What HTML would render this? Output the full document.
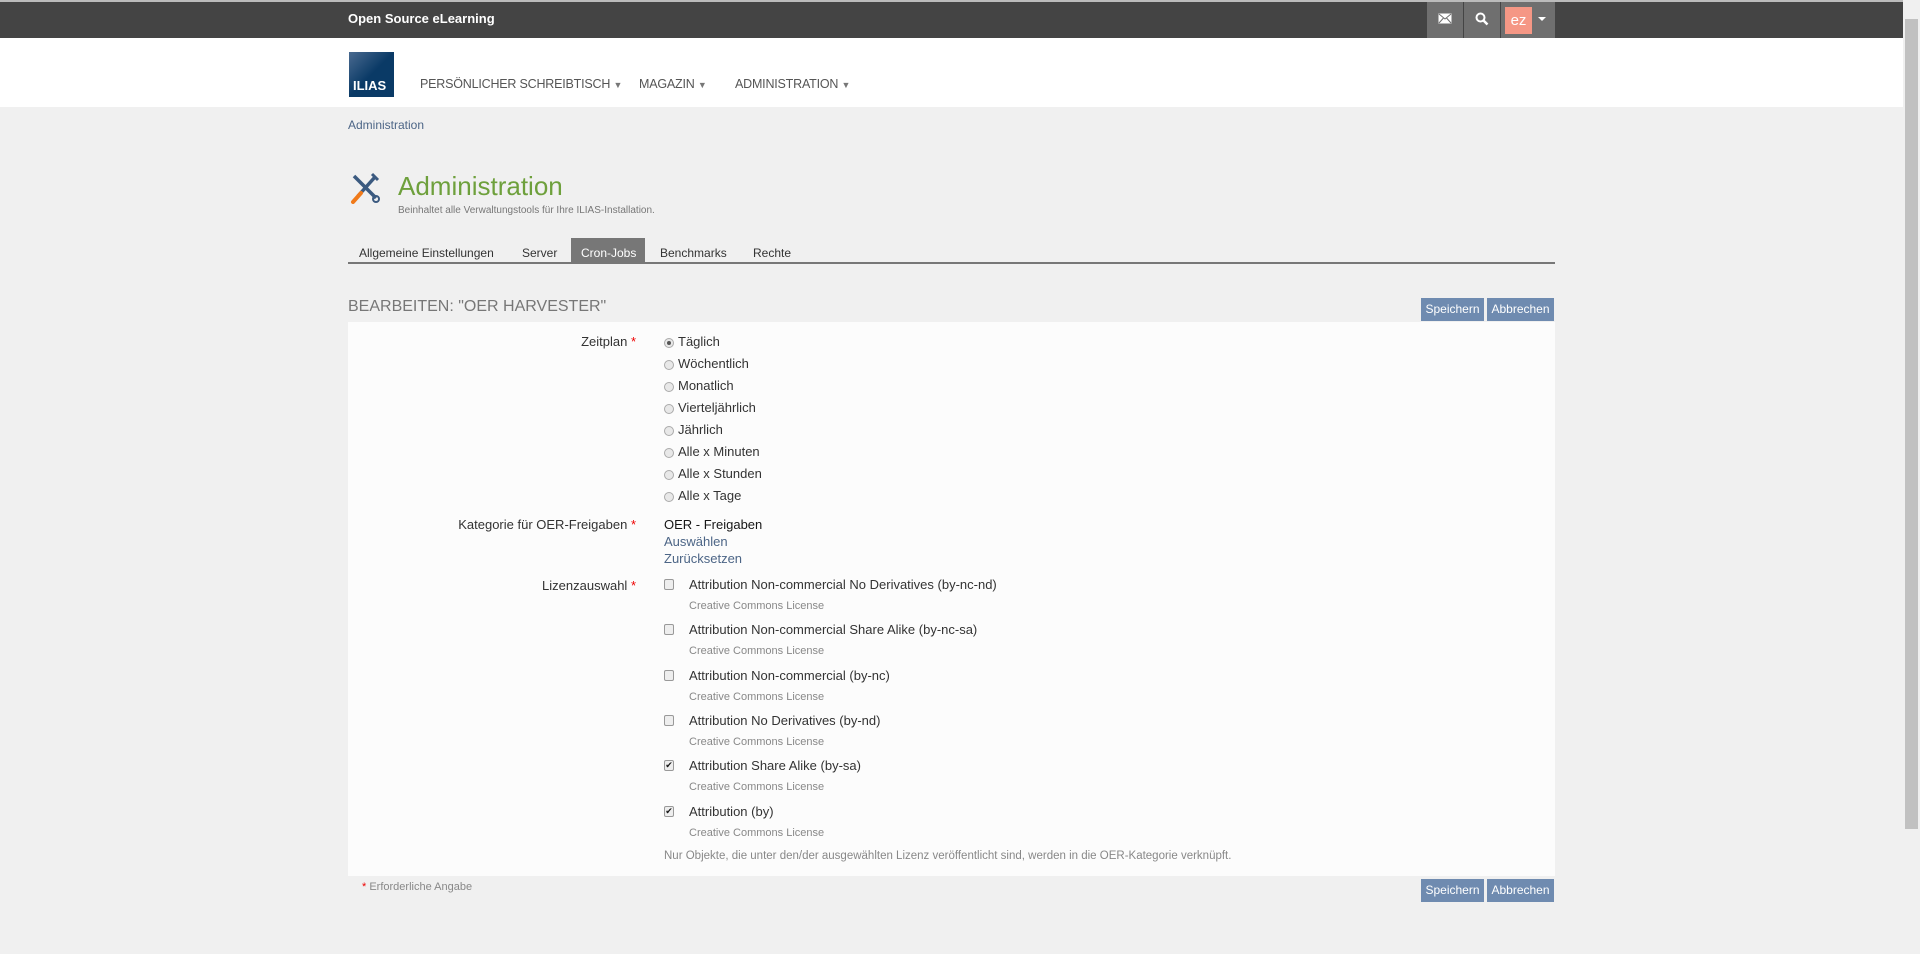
<!DOCTYPE html>
<html><head><meta charset="utf-8">
<style>
*{box-sizing:border-box;margin:0;padding:0}
body{width:1920px;height:954px;overflow:hidden;background:#f0f0f0;font-family:"Liberation Sans",sans-serif;color:#161616;position:relative;font-size:13px}
.abs{position:absolute}
#top{left:0;top:0;width:1903px;height:38px;background:#444;border-top:2px solid #bbb}
#nav{left:0;top:38px;width:1903px;height:69px;background:#fff}
#sb{left:1903px;top:0;width:17px;height:954px;background:#f0f0f0}
#sb div{position:absolute;left:2px;top:19px;width:13px;height:810px;background:#c1c1c1}
.navi{top:77px;font-size:12.5px;color:#555;letter-spacing:-0.2px}
.navi span{font-size:9px;color:#777}
.lbl{right:1284px;text-align:right;white-space:nowrap;color:#333}
.star{color:#e00}
.r{left:664px;width:10px;height:10px;border:1px solid #aaa;border-radius:50%;background:#e8e8e8}
.rt{left:678px;color:#333}
.cb{left:664px;width:10px;height:11px;border:1px solid #999;border-radius:2px;background:#eee}
.ct{left:689px;color:#333}
.cs{left:689px;font-size:11px;color:#888}
a,.lnk{color:#4c6586}
.btn{height:23px;background:#6f8bb0;color:#fff;font-size:12px;line-height:23px;text-align:center}
.tab{top:246px;font-size:12px;color:#333}
</style></head><body>
<div id="top" class="abs"></div>
<div class="abs" style="left:348px;top:11px;color:#fff;font-weight:bold;font-size:13px">Open Source eLearning</div>
<div class="abs" style="left:1427px;top:2px;width:36px;height:36px;background:#6f6f6f"></div>
<div class="abs" style="left:1464px;top:2px;width:36px;height:36px;background:#6f6f6f"></div>
<div class="abs" style="left:1501px;top:2px;width:54px;height:36px;background:#6f6f6f"></div>
<svg class="abs" style="left:1438px;top:13px" width="14" height="11"><rect x="0.5" y="0.5" width="13" height="10" fill="#fff"/><path d="M1 1L7 6L13 1M1 10L5.5 5M13 10L8.5 5" stroke="#6f6f6f" fill="none"/></svg>
<svg class="abs" style="left:1475px;top:12px" width="14" height="14"><circle cx="5.5" cy="5.5" r="4" stroke="#fff" stroke-width="2" fill="none"/><path d="M8.5 8.5L12.5 12.5" stroke="#fff" stroke-width="2.5"/></svg>
<div class="abs" style="left:1505px;top:7px;width:27px;height:27px;background:#f59785;color:#fff;font-size:15px;text-align:center;line-height:27px">ez</div>
<div class="abs" style="left:1538px;top:17px;border-left:4px solid transparent;border-right:4px solid transparent;border-top:4px solid #fff"></div>
<div id="nav" class="abs"></div>
<div class="abs" style="left:349px;top:52px;width:45px;height:45px;background:linear-gradient(135deg,#4a6a90,#0a3a66 50%);color:#fff;font-weight:bold;font-size:13px;padding:26px 0 0 4px">ILIAS</div>
<div class="abs navi" style="left:420px">PERSÖNLICHER SCHREIBTISCH <span>▼</span></div>
<div class="abs navi" style="left:639px">MAGAZIN <span>▼</span></div>
<div class="abs navi" style="left:735px">ADMINISTRATION <span>▼</span></div>
<div class="abs" style="left:348px;top:118px;font-size:12px;color:#4c6586">Administration</div>
<svg class="abs" style="left:350px;top:172px" width="30" height="32" viewBox="0 0 30 32"><path d="M4 4L26 26" stroke="#3b5a80" stroke-width="3.5"/><circle cx="26" cy="27" r="3" fill="none" stroke="#3b5a80" stroke-width="2"/><path d="M25 5L8 24" stroke="#3b5a80" stroke-width="3.5"/><path d="M11 21L3 30" stroke="#f07a1a" stroke-width="4" stroke-linecap="round"/><path d="M22 2l6 6" stroke="#3b5a80" stroke-width="3"/></svg>
<div class="abs" style="left:398px;top:171px;font-size:26px;color:#6ea03c">Administration</div>
<div class="abs" style="left:398px;top:205px;font-size:10px;color:#777">Beinhaltet alle Verwaltungstools für Ihre ILIAS-Installation.</div>
<div class="abs" style="left:348px;top:262px;width:1207px;height:2px;background:#777"></div>
<div class="abs" style="left:571px;top:238px;width:74px;height:25px;background:#777"></div>
<div class="abs tab" style="left:359px">Allgemeine Einstellungen</div>
<div class="abs tab" style="left:522px">Server</div>
<div class="abs tab" style="left:581px;color:#fff">Cron-Jobs</div>
<div class="abs tab" style="left:660px">Benchmarks</div>
<div class="abs tab" style="left:753px">Rechte</div>
<div class="abs" style="left:348px;top:298px;font-size:16px;color:#777">BEARBEITEN: "OER HARVESTER"</div>
<div class="abs btn" style="left:1421px;top:298px;width:63px">Speichern</div>
<div class="abs btn" style="left:1487px;top:298px;width:67px">Abbrechen</div>
<div class="abs" style="left:348px;top:322px;width:1207px;height:554px;background:#fcfcfc"></div>
<div class="abs lbl" style="top:334px">Zeitplan <span class="star">*</span></div>
<div class="abs r" style="top:338px"><div style="width:4px;height:4px;margin:2px;background:#555;border-radius:50%"></div></div><div class="abs rt" style="top:334px">Täglich</div>
<div class="abs r" style="top:360px"></div><div class="abs rt" style="top:356px">Wöchentlich</div>
<div class="abs r" style="top:382px"></div><div class="abs rt" style="top:378px">Monatlich</div>
<div class="abs r" style="top:404px"></div><div class="abs rt" style="top:400px">Vierteljährlich</div>
<div class="abs r" style="top:426px"></div><div class="abs rt" style="top:422px">Jährlich</div>
<div class="abs r" style="top:448px"></div><div class="abs rt" style="top:444px">Alle x Minuten</div>
<div class="abs r" style="top:470px"></div><div class="abs rt" style="top:466px">Alle x Stunden</div>
<div class="abs r" style="top:492px"></div><div class="abs rt" style="top:488px">Alle x Tage</div>
<div class="abs lbl" style="top:517px">Kategorie für OER-Freigaben <span class="star">*</span></div>
<div class="abs" style="left:664px;top:517px">OER - Freigaben</div>
<div class="abs lnk" style="left:664px;top:534px">Auswählen</div>
<div class="abs lnk" style="left:664px;top:551px">Zurücksetzen</div>
<div class="abs lbl" style="top:578px">Lizenzauswahl <span class="star">*</span></div>
<div class="abs cb" style="top:579px"></div><div class="abs ct" style="top:577px">Attribution Non-commercial No Derivatives (by-nc-nd)</div><div class="abs cs" style="top:600px">Creative Commons License</div>
<div class="abs cb" style="top:624px"></div><div class="abs ct" style="top:622px">Attribution Non-commercial Share Alike (by-nc-sa)</div><div class="abs cs" style="top:645px">Creative Commons License</div>
<div class="abs cb" style="top:670px"></div><div class="abs ct" style="top:668px">Attribution Non-commercial (by-nc)</div><div class="abs cs" style="top:691px">Creative Commons License</div>
<div class="abs cb" style="top:715px"></div><div class="abs ct" style="top:713px">Attribution No Derivatives (by-nd)</div><div class="abs cs" style="top:736px">Creative Commons License</div>
<div class="abs cb" style="top:760px;font-size:9px;line-height:9px;text-align:center">✔</div><div class="abs ct" style="top:758px">Attribution Share Alike (by-sa)</div><div class="abs cs" style="top:781px">Creative Commons License</div>
<div class="abs cb" style="top:806px;font-size:9px;line-height:9px;text-align:center">✔</div><div class="abs ct" style="top:804px">Attribution (by)</div><div class="abs cs" style="top:827px">Creative Commons License</div>
<div class="abs" style="left:664px;top:850px;font-size:11.5px;color:#888">Nur Objekte, die unter den/der ausgewählten Lizenz veröffentlicht sind, werden in die OER-Kategorie verknüpft.</div>
<div class="abs" style="left:362px;top:881px;font-size:11px;color:#888"><span class="star">*</span> Erforderliche Angabe</div>
<div class="abs btn" style="left:1421px;top:879px;width:63px">Speichern</div>
<div class="abs btn" style="left:1487px;top:879px;width:67px">Abbrechen</div>
<div id="sb" class="abs"><div></div></div>
</body></html>
